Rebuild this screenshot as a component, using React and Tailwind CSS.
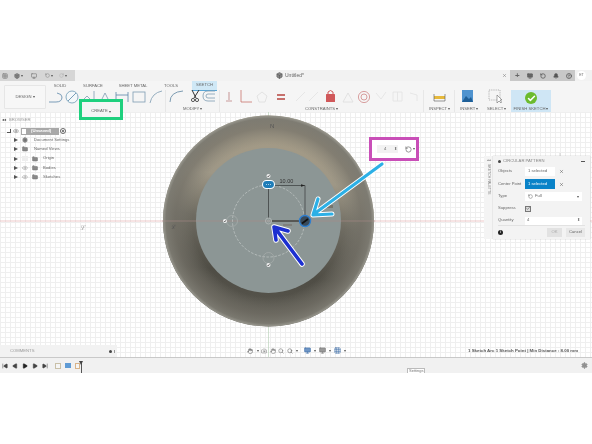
import { Box, Camera, Check, CircleHelp, Eye, Folder, Grid3x3, Hand, Monitor, Settings, Bell, Play, RotateCcw, Search, SkipBack, SkipForward, X } from 'lucide-react';

const treeRows = [
  { label: 'Document Settings', gear: true },
  { label: 'Named Views' },
  { label: 'Origin', eye: 'off' },
  { label: 'Bodies', eye: 'on' },
  { label: 'Sketches', eye: 'on' },
];

const tabs = [
  { label: 'SOLID', width: 'w-[34px]' },
  { label: 'SURFACE', width: 'w-[32px]' },
  { label: 'SHEET METAL', width: 'w-[48px]' },
  { label: 'TOOLS', width: 'w-[28px]' },
];

function Tiny({ children, className = '' }) {
  return <span className={`whitespace-nowrap text-[4.2px] leading-none text-[#666] ${className}`}>{children}</span>;
}

function Caret() {
  return <span className="ml-[1px] inline-block border-x-[1.5px] border-t-[2px] border-x-transparent border-t-[#555] align-middle" />;
}

function TitleBar() {
  return (
    <div className="flex h-[11px] items-stretch bg-[#f2f2f2]">
      <div className="flex w-[75px] items-center bg-[#d6d6d6] pl-[2px]">
        <Grid3x3 size={6} color="#777" />
        <Box size={6} color="#666" fill="#888" className="ml-[6px]" />
        <Caret />
        <Monitor size={6} color="#666" className="ml-[8px]" />
        <RotateCcw size={5} color="#777" className="ml-[8px]" />
        <Caret />
        <RotateCcw size={5} color="#aaa" className="ml-[6px] -scale-x-100" />
        <Caret />
      </div>
      <div className="flex flex-1 items-center pl-[201px]">
        <Box size={7} color="#555" fill="#888" />
        <span className="ml-[2px] text-[5px] leading-none text-[#666]">Untitled*</span>
      </div>
      <div className="flex items-center pr-[6px]">
        <X size={5} color="#666" className="mr-[3px]" />
        <div className="flex h-full w-[65px] items-center gap-[7px] bg-[#c8c8c8] pl-[5px]">
          <span className="text-[8px] font-bold leading-none text-[#666]">+</span>
          <Monitor size={6} color="#555" fill="#666" />
          <RotateCcw size={6} color="#555" strokeWidth={3} />
          <Bell size={6} color="#555" fill="#555" />
          <CircleHelp size={6} color="#555" strokeWidth={3} />
        </div>
        <div className="ml-[2px] flex h-[9px] w-[9px] items-center justify-center rounded-full bg-white">
          <span className="text-[3.5px] leading-none text-[#666]">ET</span>
        </div>
      </div>
    </div>
  );
}

function ToolIcons() {
  // the ribbon glyphs sit on one strip, drawn in one go
  return (
    <svg width="592" height="24" viewBox="0 0 592 24" className="block">
      <path d="M49 14 H56 Q62 14 62 9 Q62 6 57 5" fill="none" stroke="#5b87a8" strokeWidth="0.8" />
      <circle cx="72" cy="9" r="6" fill="#f4f8fa" stroke="#6f9bb5" strokeWidth="0.8" />
      <path d="M68 13 L76 5" stroke="#5b87a8" strokeWidth="0.8" />
      <path d="M83 12 L87 8 L91 12 M94 13 V3 M101 13 L105 5 L109 13 Z" fill="none" stroke="#7d9cb2" strokeWidth="0.8" />
      <path d="M116 4 V14 M128 4 V14 M116 7 H128" fill="none" stroke="#5b87a8" strokeWidth="0.8" />
      <rect x="133" y="4" width="12" height="10" fill="none" stroke="#7d9cb2" strokeWidth="0.8" />
      <path d="M150 15 Q152 5 162 3" fill="none" stroke="#7d9cb2" strokeWidth="0.8" />
      <line x1="165.5" y1="2" x2="165.5" y2="24" stroke="#ddd" strokeWidth="0.6" />
      <path d="M170 14 Q170 4 183 3" fill="none" stroke="#7d9cb2" strokeWidth="1" />
      <path d="M192 2 L196 10 M199 2 L194 10" stroke="#333" strokeWidth="1" />
      <circle cx="193" cy="12" r="1.6" fill="none" stroke="#333" strokeWidth="0.8" />
      <circle cx="197" cy="12" r="1.6" fill="none" stroke="#333" strokeWidth="0.8" />
      <path d="M215 3 H208 Q203 3 203 8 Q203 13 208 13 H215 M215 6 H208 Q206 6 206 8 Q206 10 208 10 H215" fill="none" stroke="#7d9cb2" strokeWidth="0.8" />
      <line x1="219.5" y1="2" x2="219.5" y2="24" stroke="#ddd" strokeWidth="0.6" />
      <path d="M229 4 V12 M226 13 H232" stroke="#d8b9b9" strokeWidth="1.6" />
      <path d="M241 2 V14 H252" fill="none" stroke="#c9736c" strokeWidth="0.8" />
      <path d="M262 4 L267 8 L265 14 H259 L257 8 Z" fill="none" stroke="#ddd" strokeWidth="0.8" />
      <path d="M277 7 H285 M277 11 H285" stroke="#b6443f" strokeWidth="1.4" />
      <path d="M296 13 L305 4 M309 13 L318 4" stroke="#e2e2e2" strokeWidth="0.8" />
      <rect x="326" y="6" width="9" height="8" fill="#d0585a" rx="0.5" />
      <path d="M328 6 V4 Q330.5 1 333 4 V6" fill="none" stroke="#d0585a" strokeWidth="1" />
      <path d="M343 14 L348 5 L353 14 Z" fill="none" stroke="#ddd" strokeWidth="0.8" />
      <circle cx="364" cy="9" r="5.6" fill="none" stroke="#d08a8a" strokeWidth="0.8" />
      <circle cx="364" cy="9" r="3" fill="none" stroke="#d08a8a" strokeWidth="0.8" />
      <path d="M376 5 L381 11 L386 4 M393 4 H402 V13 H393 Z M397.5 4 V13 M410 5 L417 7 V13" fill="none" stroke="#e2e2e2" strokeWidth="0.8" />
      <line x1="423.5" y1="2" x2="423.5" y2="24" stroke="#ddd" strokeWidth="0.6" />
      <rect x="434" y="8" width="11" height="3" fill="#e6b93c" />
      <path d="M434 6 V13 M445 6 V13 M434 13 H445" fill="none" stroke="#555" strokeWidth="0.6" />
      <line x1="454.5" y1="2" x2="454.5" y2="24" stroke="#ddd" strokeWidth="0.6" />
      <rect x="462" y="2" width="11" height="12" fill="#4f93cf" />
      <path d="M462 14 L466 8 L469 11 L471 9 L473 14 Z" fill="#1f5f97" />
      <rect x="489" y="2" width="11" height="10" fill="none" stroke="#888" strokeWidth="0.6" strokeDasharray="1.2 1" />
      <path d="M497 7 L497 15 L499 13 L501 15 L501.5 14 L500 12 L502 12 Z" fill="#fff" stroke="#555" strokeWidth="0.5" />
    </svg>
  );
}

function RibbonLabels() {
  const labels = [
    ['MODIFY', 'left-[183px]'],
    ['CONSTRAINTS', 'left-[305px]'],
    ['INSPECT', 'left-[429px]'],
    ['INSERT', 'left-[460px]'],
    ['SELECT', 'left-[487px]'],
  ];
  return labels.map(([label, pos]) => (
    <div key={label} className={`absolute top-[26px] flex items-center ${pos}`}>
      <Tiny>{label}</Tiny>
      <Caret />
    </div>
  ));
}

function Ribbon() {
  return (
    <div className="relative flex h-[31px] items-stretch bg-[#f5f5f5]">
      <div className="flex w-[43px] shrink-0 items-center pl-[4px] pt-[1px]">
        <div className="flex h-[24px] w-[42px] shrink-0 items-center justify-center rounded-[1px] border border-[#e6e6e6] bg-[#f7f7f7]">
          <Tiny>DESIGN</Tiny>
          <Caret />
        </div>
      </div>
      <div className="flex h-[10px] flex-1 items-stretch">
        {tabs.map((tab) => (
          <div key={tab.label} className={`flex ${tab.width} items-center justify-center`}>
            <Tiny>{tab.label}</Tiny>
          </div>
        ))}
        <div className="ml-[7px] flex w-[25px] items-center justify-center border-b border-[#5aa6d6] bg-[#cfe8f6]">
          <Tiny className="text-[#4b7f9f]">SKETCH</Tiny>
        </div>
      </div>
      <div className="absolute left-[511px] top-[9px] flex h-[22px] w-[40px] flex-col items-center bg-[#cfe6f5] pt-[2px]">
        <div className="flex h-[12px] w-[12px] items-center justify-center rounded-full bg-[#6cbb2e]">
          <Check size={9} color="#fff" strokeWidth={4} />
        </div>
        <div className="mt-[3px] flex items-center">
          <Tiny>FINISH SKETCH</Tiny>
          <Caret />
        </div>
      </div>
      <div className="absolute left-0 top-[7px]">
        <ToolIcons />
      </div>
      <RibbonLabels />
    </div>
  );
}

function Model() {
  return (
    <svg width="592" height="245" viewBox="0 0 592 245" className="absolute left-0 top-0">
      <defs>
        <linearGradient id="bowl" x1="0.55" y1="0" x2="0.45" y2="1">
          <stop offset="0.12" stopColor="#a39a86" />
          <stop offset="0.3" stopColor="#9e9786" />
          <stop offset="0.5" stopColor="#6f6c62" />
          <stop offset="0.75" stopColor="#4f4d45" />
          <stop offset="1" stopColor="#5a5850" />
        </linearGradient>
        <radialGradient id="rim">
          <stop offset="0.72" stopColor="#7f7d74" stopOpacity="0" />
          <stop offset="0.88" stopColor="#757269" stopOpacity="0.7" />
          <stop offset="0.97" stopColor="#7c7a71" stopOpacity="0.95" />
          <stop offset="1" stopColor="#9a9990" stopOpacity="1" />
        </radialGradient>
      </defs>
      <line x1="0" y1="109" x2="592" y2="109" stroke="#e6b3b3" strokeWidth="0.7" />
      <line x1="268.5" y1="0" x2="268.5" y2="245" stroke="#bcd2bc" strokeWidth="0.7" />
      <circle cx="268.5" cy="109" r="105.5" fill="url(#bowl)" />
      <circle cx="268.5" cy="109" r="105.5" fill="url(#rim)" />
      <circle cx="268.5" cy="108.5" r="72.5" fill="#8c9695" />
      <line x1="162" y1="109" x2="375" y2="109" stroke="#a98a88" strokeWidth="0.6" />
      <circle cx="268.5" cy="109" r="36" fill="none" stroke="#c4cac9" strokeWidth="0.7" strokeDasharray="2.5 1.5" />
      <path d="M268.5 77 V106" fill="none" stroke="#474c4c" strokeWidth="0.9" />
      <path d="M275 73.5 H305 V104" fill="none" stroke="#363b3b" strokeWidth="0.7" />
      <path d="M272 109 H300" stroke="#3b3e3c" strokeWidth="1.4" />
      <path d="M305 73.5 L301 72.2 V74.8 Z" fill="#222" />
      <text x="279.5" y="71" fontSize="5.5" fill="#333" fontFamily="Liberation Sans, sans-serif">10.00</text>
      <circle cx="232" cy="109" r="5.5" fill="none" stroke="#a8adac" strokeWidth="0.7" />
      <circle cx="268.5" cy="146" r="5.5" fill="none" stroke="#a8adac" strokeWidth="0.7" />
      <circle cx="268.5" cy="109" r="3" fill="none" stroke="#b5bbba" strokeWidth="0.8" />
      <circle cx="268.5" cy="109" r="1" fill="none" stroke="#b5bbba" strokeWidth="0.5" />
      <rect x="283" y="112" width="9" height="2" fill="#80807c" />
      <rect x="326" y="93" width="7" height="3" fill="#77756c" />
      {[[268.5, 64], [225, 109], [268.5, 153]].map(([x, y]) => (
        <g key={`${x}-${y}`}>
          <circle cx={x} cy={y} r="2" fill="#f2f2f2" />
          <path d={`M${x - 1} ${y} L${x - 0.2} ${y + 1} L${x + 1.2} ${y - 1.2}`} fill="none" stroke="#333" strokeWidth="0.6" />
        </g>
      ))}
      <rect x="262.5" y="68.5" width="12" height="8" rx="4" fill="#1f7db8" stroke="#fff" strokeWidth="1.1" />
      <path d="M266 72.5 H271" stroke="#cfe6f5" strokeWidth="0.8" strokeDasharray="1 1" />
      <circle cx="305" cy="109" r="5.5" fill="#394a5a" stroke="#2f7fd0" strokeWidth="1.4" />
      <path d="M302 111.5 L308 107" stroke="#111" strokeWidth="1.6" />
      <text x="171" y="117" fontSize="6" fill="#555" fontFamily="Liberation Sans, sans-serif">ℒ</text>
      <text x="80" y="118" fontSize="7" fill="#aaa" fontFamily="Liberation Sans, sans-serif">ℒ</text>
      <text x="270" y="15.5" fontSize="6" fill="#555" fontFamily="Liberation Sans, sans-serif">N</text>
      {/* call-out arrows from the guide */}
      <path d="M382 52 L314 102 M318 87 L313 103 L332 102" fill="none" stroke="#fff" strokeWidth="5" strokeLinecap="round" strokeLinejoin="round" />
      <path d="M382 52 L314 102 M318 87 L313 103 L332 102" fill="none" stroke="#2cb0e6" strokeWidth="3.2" strokeLinecap="round" strokeLinejoin="round" />
      <path d="M302 152 L275 116 M276 128 L274 115 L288 119" fill="none" stroke="#fff" strokeWidth="5.5" strokeLinecap="round" strokeLinejoin="round" />
      <path d="M302 152 L275 116 M276 128 L274 115 L288 119" fill="none" stroke="#1c2fd0" strokeWidth="3.6" strokeLinecap="round" strokeLinejoin="round" />
      {/* view cube */}
      <path d="M560 47 L560 41 M560 71 L571 70 M560 71 L559 74" stroke="#aaa" strokeWidth="0.5" />
      <rect x="561" y="53" width="18" height="18" fill="#d8d8d8" stroke="#bdbdbd" strokeWidth="0.5" />
      <text x="570" y="64" textAnchor="middle" fontSize="4" fill="#888" fontFamily="Liberation Sans, sans-serif">FRONT</text>
    </svg>
  );
}

function BrowserPanel() {
  return (
    <div className="absolute left-0 top-0 w-[80px] pt-[5px]">
      <div className="flex h-[6px] items-center pl-[2px]">
        <span className="text-[4px] font-bold leading-none text-[#555]">◂◂</span>
        <Tiny className="ml-[3px] text-[#999]">BROWSER</Tiny>
      </div>
      <div className="mt-[4px] flex h-[8px] items-center pl-[7px]">
        <span className="h-[4px] w-[4px] border-b border-r border-[#555]" />
        <Eye size={6} color="#777" className="ml-[2px]" />
        <div className="ml-[2px] flex h-[7px] w-[38px] items-center bg-[#a8a8a8]">
          <span className="ml-[1px] h-[5px] w-[4px] bg-white" />
          <span className="ml-[5px] text-[4.2px] font-bold leading-none text-white">(Unsaved)</span>
        </div>
        <span className="ml-[1px] flex h-[6px] w-[6px] items-center justify-center rounded-full border border-[#666]">
          <span className="h-[2px] w-[2px] rounded-full bg-[#555]" />
        </span>
      </div>
      <div className="mt-[1px] flex flex-col gap-[1.3px]">
        {treeRows.map((row) => (
          <div key={row.label} className="flex h-[8px] items-center pl-[14px]">
            <span className="h-0 w-0 border-y-[2.5px] border-l-[4px] border-y-transparent border-l-[#555]" />
            {row.eye === 'on' && <Eye size={6} color="#999" className="ml-[4px]" />}
            {row.eye === 'off' && <span className="ml-[4px] h-[5px] w-[6px] bg-[#eee]" />}
            {row.gear ? (
              <Settings size={6} color="#666" fill="#888" className="ml-[4px]" />
            ) : (
              <Folder size={6} color="#777" fill="#888" className="ml-[4px]" />
            )}
            <Tiny className={row.eye ? 'ml-[5px]' : 'ml-[6px]'}>{row.label}</Tiny>
          </div>
        ))}
      </div>
    </div>
  );
}

function PatternDialog() {
  const label = 'w-[27px] text-[4.2px] leading-none text-[#666]';
  return (
    <div className="absolute left-[484px] top-[44px] flex h-[83px]">
      <div className="flex w-[9px] flex-col items-center bg-[#f4f4f4] pt-[3px]">
        <span className="text-[3px] leading-none text-[#555]">◂◂</span>
        <span className="mt-[2px] text-[3.5px] leading-none text-[#777] [writing-mode:vertical-rl]">SKETCH PALETTE</span>
      </div>
      <div className="flex w-[97px] flex-col bg-[#f3f3f3] px-[5px] shadow-[0_0_1px_#aaa]">
        <div className="flex h-[11px] items-center">
          <span className="h-[3px] w-[3px] rounded-full bg-[#444]" />
          <Tiny className="ml-[2px] text-[#888]">CIRCULAR PATTERN</Tiny>
          <span className="ml-auto h-[1.5px] w-[4px] bg-[#555]" />
        </div>
        <div className="flex flex-col gap-[3px]">
          <div className="flex h-[9px] items-center">
            <span className={label}>Objects</span>
            <div className="flex h-[9px] w-[30px] items-center bg-white pl-[3px]">
              <Tiny>1 selected</Tiny>
            </div>
            <X size={5} color="#444" className="ml-[4px]" />
          </div>
          <div className="flex h-[10px] items-center">
            <span className={label}>Center Point</span>
            <div className="flex h-[10px] w-[30px] items-center bg-[#0a83c8] pl-[3px]">
              <Tiny className="text-white">1 selected</Tiny>
            </div>
            <X size={5} color="#444" className="ml-[4px]" />
          </div>
          <div className="flex h-[9px] items-center">
            <span className={label}>Type</span>
            <div className="flex h-[9px] w-[57px] items-center bg-white px-[3px]">
              <RotateCcw size={5} color="#555" />
              <Tiny className="ml-[2px]">Full</Tiny>
              <span className="ml-auto flex"><Caret /></span>
            </div>
          </div>
          <div className="flex h-[9px] items-center">
            <span className={label}>Suppress</span>
            <span className="flex h-[6px] w-[6px] items-center justify-center border border-[#777] bg-[#ddd]">
              <Check size={5} color="#333" strokeWidth={3} />
            </span>
          </div>
          <div className="flex h-[9px] items-center">
            <span className={label}>Quantity</span>
            <div className="flex h-[8px] w-[57px] items-center justify-between bg-white px-[2px]">
              <Tiny>4</Tiny>
              <Tiny className="text-[3px]">⬍</Tiny>
            </div>
          </div>
        </div>
        <div className="mt-auto flex h-[14px] items-center border-t border-[#e2e2e2]">
          <span className="flex h-[5px] w-[5px] items-center justify-center rounded-full bg-[#222] text-[3px] font-bold leading-none text-white">i</span>
          <div className="ml-auto flex h-[9px] w-[15px] items-center justify-center bg-[#e2e2e2]">
            <Tiny className="text-[#aaa]">OK</Tiny>
          </div>
          <div className="ml-[4px] flex h-[9px] w-[19px] items-center justify-center bg-[#e8e8e8]">
            <Tiny>Cancel</Tiny>
          </div>
        </div>
      </div>
    </div>
  );
}

function BottomOfCanvas() {
  return (
    <>
      <div className="absolute bottom-0 left-0 flex h-[12px] w-[117px] items-center justify-between bg-[#f2f2f2] pl-[10px] pr-[2px]">
        <Tiny className="text-[#999]">COMMENTS</Tiny>
        <div className="flex items-center gap-[2px]">
          <span className="h-[3px] w-[3px] rounded-full bg-[#444]" />
          <span className="h-[3px] w-[1px] bg-[#999]" />
        </div>
      </div>
      <div className="absolute bottom-[3px] left-[247px] flex h-[7px] items-center gap-[2.5px]">
        <Hand size={6} color="#555" />
        <Caret />
        <Camera size={6} color="#777" />
        <Hand size={6} color="#666" />
        <Search size={6} color="#666" />
        <Search size={6} color="#555" />
        <Caret />
        <Monitor size={7} color="#3f6fa8" fill="#6f96c6" className="ml-[3px]" />
        <Caret />
        <Monitor size={7} color="#777" fill="#999" />
        <Caret />
        <Grid3x3 size={7} color="#3f6fa8" />
        <Caret />
      </div>
      <span className="absolute bottom-[4px] left-[468px] whitespace-nowrap text-[4.4px] font-bold leading-none text-[#555]">
        1 Sketch Arc 1 Sketch Point | Min Distance : 8.00 mm
      </span>
    </>
  );
}

function Timeline() {
  return (
    <div className="relative flex h-[16px] items-center border-t border-[#c9c9c9] bg-[#f1f1f1] pl-[2px]">
      <div className="flex items-center gap-[4px]">
        <SkipBack size={6} color="#444" fill="#444" />
        <Play size={6} color="#444" fill="#444" className="rotate-180" />
        <Play size={6} color="#222" fill="#222" />
        <Play size={6} color="#444" fill="#444" />
        <SkipForward size={6} color="#444" fill="#444" />
      </div>
      <div className="ml-[7px] flex items-center gap-[4px]">
        <span className="h-[6px] w-[6px] border border-[#c9c0a8] bg-[#f5f5f5]" />
        <span className="h-[5px] w-[6px] bg-[#5f9bd5]" />
        <span className="h-[6px] w-[5px] border border-[#d8b48a] bg-[#f5f5f5]" />
      </div>
      <div className="absolute left-[81px] top-[3px] h-[12px] w-[1px] bg-[#555]" />
      <div className="absolute left-[79px] top-[3px] h-0 w-0 border-x-[2.5px] border-t-[4px] border-x-transparent border-t-[#444]" />
      <span className="absolute left-[407px] top-[10px] border border-b-0 border-[#bbb] bg-white px-[1px] text-[4px] leading-none text-[#777]">Settings</span>
      <Settings size={7} color="#888" fill="#999" className="absolute left-[581px] top-[4px]" />
    </div>
  );
}

export default function App() {
  return (
    <div className="relative h-[444px] w-[592px] overflow-hidden bg-white font-['Liberation_Sans',sans-serif] blur-[0.25px]">
      <div className="h-[70px]" />
      <TitleBar />
      <Ribbon />
      <div className="relative h-[245px] overflow-hidden bg-white bg-[linear-gradient(#efefef_1px,transparent_1px),linear-gradient(90deg,#efefef_1px,transparent_1px)] bg-[length:5px_5px]">
        <Model />
        <BrowserPanel />
        <PatternDialog />
        <BottomOfCanvas />
      </div>
      <Timeline />

      <div className="absolute left-[79px] top-[99px] flex h-[21px] w-[44px] items-end justify-center border-[3px] border-[#1fd07e] bg-[#f5f5f5] pb-[4px]">
        <Tiny>CREATE</Tiny>
        <Caret />
      </div>
      <div className="absolute left-[369px] top-[137px] flex h-[24px] w-[50px] items-center border-[3px] border-[#c94fb8] bg-white pl-[5px]">
        <div className="flex h-[8px] w-[21px] items-center justify-between bg-[#f2f2f2] pl-[7px] pr-[1px]">
          <Tiny>4</Tiny>
          <Tiny className="text-[3px]">⬍</Tiny>
        </div>
        <RotateCcw size={7} color="#555" className="ml-[7px]" />
        <Caret />
      </div>
    </div>
  );
}
